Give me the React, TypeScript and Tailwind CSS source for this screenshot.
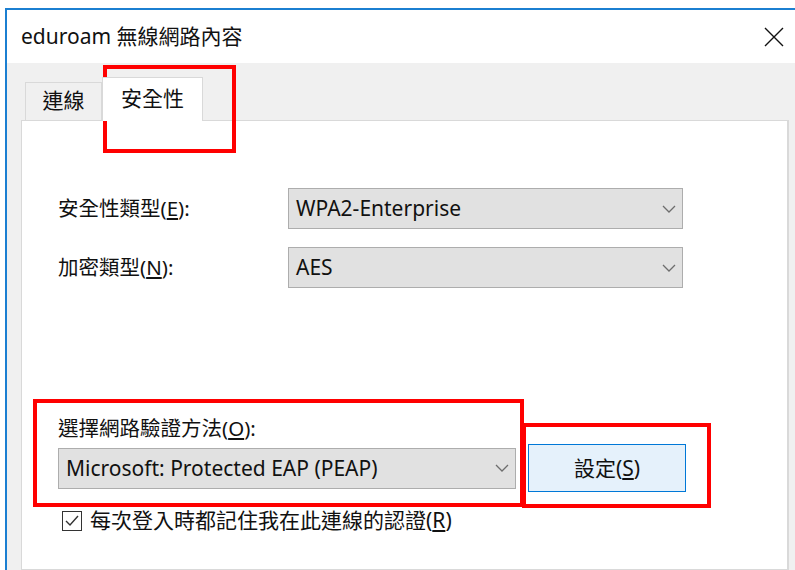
import React from 'react';

const uiFont = "font-['Noto_Sans','Noto_Sans_CJK_TC',sans-serif]";

// 下拉選單右側的箭頭
const Chevron = () => (
  <svg width="14" height="8" viewBox="0 0 14 8" className="shrink-0">
    <path d="M1 1 L7 7 L13 1" fill="none" stroke="#6d6d6d" strokeWidth="1.3" />
  </svg>
);

const ComboBox = ({ value, className }: { value: string; className: string }) => (
  <div
    className={`flex h-[41px] items-center justify-between border border-[#adadad] bg-[#e1e1e1] pl-[7px] pr-[6px] text-[21px] leading-none text-[#111] ${className}`}
  >
    <span>{value}</span>
    <Chevron />
  </div>
);

// 帶有快速鍵底線的標籤文字
const Label = ({ text, hotkey }: { text: string; hotkey: string }) => (
  <span className="text-[20.5px] leading-[26px] text-[#111]">
    {text}(<span className="underline underline-offset-2">{hotkey}</span>):
  </span>
);

export default function App() {
  return (
    <div className={`relative h-[570px] w-[795px] overflow-hidden bg-white ${uiFont}`}>
      <div className="ml-[5px] mt-[8px] flex h-[562px] flex-col border-l-2 border-t-2 border-[#1b7fd1]">
        {/* 標題列 */}
        <div className="flex h-[53px] shrink-0 items-center justify-between bg-white pl-[14px] pr-[10px]">
          <span className="text-[21px] leading-none text-[#111]">eduroam 無線網路內容</span>
          <svg width="20" height="20" viewBox="0 0 20 20" className="mr-[1px]">
            <path d="M1 1 L19 19 M19 1 L1 19" stroke="#111" strokeWidth="1.4" />
          </svg>
        </div>

        {/* 對話框內容 */}
        <div className="flex flex-1 flex-col bg-[#f0f0f0] pl-[14px] pt-[14px]">
          {/* 分頁標籤 */}
          <div className="relative z-10 flex h-[43px] items-end pl-[4px]">
            <div className="flex h-[38px] w-[77px] items-center justify-center border border-b-0 border-[#d9d9d9] bg-[#f0f0f0] pb-[2px] text-[21px] leading-none text-[#111]">
              連線
            </div>
            <div className="mb-[-1px] flex h-[44px] w-[101px] items-start justify-center border border-b-0 border-[#d9d9d9] bg-white pt-[10px] text-[21px] leading-none text-[#111]">
              安全性
            </div>
          </div>

          <div className="flex w-[768px] flex-1 flex-col border border-r-2 border-[#d9d9d9] bg-white pl-[36px] pt-[67px]">
            <div className="flex items-center">
              <div className="w-[230px]">
                <Label text="安全性類型" hotkey="E" />
              </div>
              <ComboBox value="WPA2-Enterprise" className="w-[395px]" />
            </div>
            <div className="mt-[18px] flex items-center">
              <div className="w-[230px]">
                <Label text="加密類型" hotkey="N" />
              </div>
              <ComboBox value="AES" className="w-[395px]" />
            </div>

            <div className="mt-[127px]">
              <Label text="選擇網路驗證方法" hotkey="O" />
            </div>
            <div className="mt-[2px] flex items-center">
              <ComboBox value="Microsoft: Protected EAP (PEAP)" className="w-[458px] pl-[6px]" />
              <button className="ml-[12px] flex h-[48px] w-[158px] items-center justify-center border border-[#0078d7] bg-[#e5f1fb] text-[21px] leading-none text-[#111]">
                設定(<span className="underline underline-offset-2">S</span>)
              </button>
            </div>

            <div className="mt-[18px] flex items-center pl-[4px]">
              <div className="flex h-[20px] w-[20px] items-center justify-center border border-[#333] bg-white">
                <svg width="16" height="14" viewBox="0 0 16 14">
                  <path d="M2 7 L6 11 L14 2" fill="none" stroke="#333" strokeWidth="1.4" />
                </svg>
              </div>
              <span className="ml-[8px] text-[21px] leading-none text-[#111]">
                每次登入時都記住我在此連線的認證(<span className="underline underline-offset-2">R</span>)
              </span>
            </div>
          </div>
        </div>
      </div>

      {/* 紅色標示框 */}
      <div className="pointer-events-none absolute left-[103px] top-[65px] h-[88px] w-[133px] border-[4px] border-[#ff0000]" />
      <div className="pointer-events-none absolute left-[33px] top-[399px] h-[108px] w-[491px] border-[4px] border-[#ff0000]" />
      <div className="pointer-events-none absolute left-[522px] top-[423px] h-[85px] w-[189px] border-[4px] border-[#ff0000]" />
    </div>
  );
}
